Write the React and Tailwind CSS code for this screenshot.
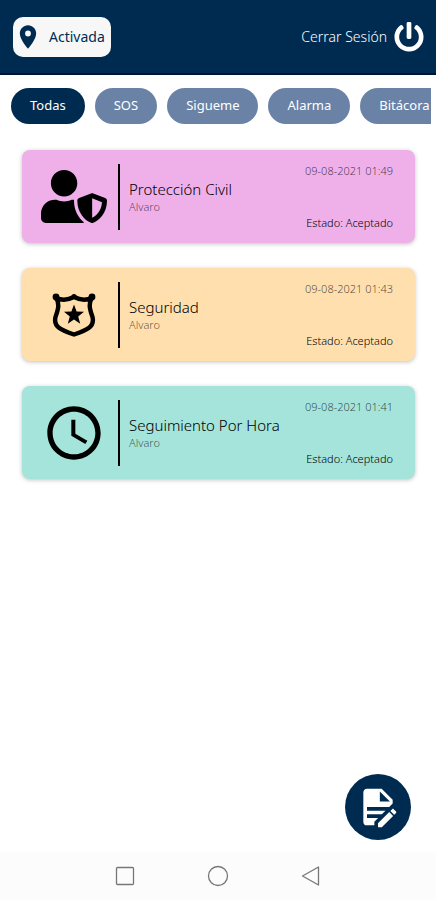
import React, { useState } from 'react';
import { FaUserShield, FaPowerOff } from 'react-icons/fa';
import { MdLocationOn, MdAccessTime } from 'react-icons/md';

const PoliceBadgeIcon = ({ className }) => (
  <svg className={className} viewBox="0 0 44 44" fill="none">
    <path
      d="M4 4.500C9 7.500 16 7 22 4C28 7 35 7.500 40 4.500C36 11 38 17 40.500 24C43 34 34 37.500 22 41.500C10 37.500 1 34 3.500 24C6 17 8 11 4 4.500Z"
      stroke="currentColor"
      strokeWidth="4.400"
      strokeLinejoin="round"
    />
    <circle cx="4" cy="4" r="3.400" fill="currentColor" />
    <circle cx="22" cy="3.500" r="2.600" fill="currentColor" />
    <circle cx="40" cy="4" r="3.400" fill="currentColor" />
    <path
      d="M22 11.500L24.600 18.500L32 18.800L26.200 23.500L28.200 30.800L22 26.600L15.800 30.800L17.800 23.500L12 18.800L19.400 18.500Z"
      fill="currentColor"
    />
  </svg>
);

const FileEditIcon = ({ className }) => (
  <svg className={className} viewBox="0 0 24 24" fill="currentColor">
    <path d="M6,2C4.89,2 4,2.9 4,4V20A2,2 0 0,0 6,22H10V20.09L12.09,18H6V16H14.09L16.09,14H6V12H18.09L20,10.09V8L14,2H6M13,3.5L18.5,9H13V3.5M20.15,13C20,13 19.86,13.05 19.75,13.16L18.73,14.18L20.82,16.26L21.84,15.25C22.05,15.03 22.05,14.67 21.84,14.46L20.54,13.16C20.43,13.05 20.29,13 20.15,13M18.14,14.77L12,20.92V23H14.08L20.23,16.85L18.14,14.77Z" />
  </svg>
);

const filters = ['Todas', 'SOS', 'Sigueme', 'Alarma', 'Bitácora'];

const alerts = [
  {
    title: 'Protección Civil',
    user: 'Alvaro',
    date: '09-08-2021 01:49',
    status: 'Aceptado',
    color: 'bg-[#efb0ea]',
    icon: <FaUserShield className="w-[66px] h-[53px]" />
  },
  {
    title: 'Seguridad',
    user: 'Alvaro',
    date: '09-08-2021 01:43',
    status: 'Aceptado',
    color: 'bg-[#ffdfae]',
    icon: <PoliceBadgeIcon className="size-11" />
  },
  {
    title: 'Seguimiento Por Hora',
    user: 'Alvaro',
    date: '09-08-2021 01:41',
    status: 'Aceptado',
    color: 'bg-[#a4e4da]',
    icon: <MdAccessTime className="size-16" />
  }
];

const AlertCard = ({ alert }) => (
  <article className={`flex items-center h-[93px] pl-[19px] pr-[22px] rounded-lg shadow-[0_1px_4px_rgba(0,0,0,0.25)] ${alert.color}`}>
    <div className="flex justify-center w-[66px] shrink-0 text-black">{alert.icon}</div>
    <div className="w-[2px] h-[66px] ml-[11px] mr-[9px] shrink-0 bg-black"></div>
    <div className="flex-1 min-w-0">
      <h2 className="text-[15px] leading-5 font-light text-black whitespace-nowrap">{alert.title}</h2>
      <p className="text-[11px] leading-4 font-light text-black/65">{alert.user}</p>
    </div>
    <div className="flex flex-col justify-between items-end h-[68px] shrink-0 text-[11px] leading-4 font-light">
      <time className="text-black/70">{alert.date}</time>
      <p className="text-black">Estado: {alert.status}</p>
    </div>
  </article>
);

const App = () => {
  const [active, setActive] = useState('Todas');

  return (
    <div className="relative flex flex-col min-h-screen bg-white font-['Noto_Sans',sans-serif]">
      <header className="flex items-center justify-between h-[75px] pl-[13px] pr-3 bg-[#002b51] border-b-2 border-[#001238]">
        <button className="flex items-center gap-[7px] h-10 pl-px pr-[6px] rounded-[10px] bg-[#f7f7f7] text-[#002b51]">
          <MdLocationOn className="size-7" />
          <span className="text-sm">Activada</span>
        </button>
        <button className="flex items-center gap-[7px] text-white">
          <span className="text-sm font-light">Cerrar Sesión</span>
          <FaPowerOff className="size-[30px]" />
        </button>
      </header>

      <nav className="flex gap-[10px] mt-[13px] ml-[11px] mr-[5px] overflow-hidden">
        {filters.map((filter) => (
          <button
            key={filter}
            onClick={() => setActive(filter)}
            className={`h-9 px-[19px] shrink-0 rounded-full text-[13px] text-white ${active === filter ? 'bg-[#002b51]' : 'bg-[#6a82a6]'}`}
          >
            {filter}
          </button>
        ))}
      </nav>

      <main className="flex flex-col flex-1 gap-[25px] pt-[26px] pl-[22px] pr-[21px]">
        {alerts.map((alert) => (
          <AlertCard key={alert.title} alert={alert} />
        ))}
      </main>

      <button
        aria-label="Nuevo reporte"
        className="absolute right-[25px] bottom-[60px] flex items-center justify-center size-[66px] rounded-full bg-[#002b51] text-white"
      >
        <FileEditIcon className="size-11" />
      </button>

      <footer className="flex items-center justify-center gap-[71px] h-12 bg-[#fcfcfc] text-[#777777]">
        <button aria-label="Recientes">
          <svg className="size-[22px]" viewBox="0 0 22 22" fill="none" stroke="currentColor" strokeWidth="1.3">
            <rect x="2.500" y="2.500" width="17" height="17" rx="1" />
          </svg>
        </button>
        <button aria-label="Inicio">
          <svg className="size-[22px]" viewBox="0 0 22 22" fill="none" stroke="currentColor" strokeWidth="1.3">
            <circle cx="11" cy="11" r="9.500" />
          </svg>
        </button>
        <button aria-label="Atrás">
          <svg className="size-[22px]" viewBox="0 0 22 22" fill="none" stroke="currentColor" strokeWidth="1.3" strokeLinejoin="round">
            <path d="M18.500 2V20L2.500 11Z" />
          </svg>
        </button>
      </footer>
    </div>
  );
};

export default App;
